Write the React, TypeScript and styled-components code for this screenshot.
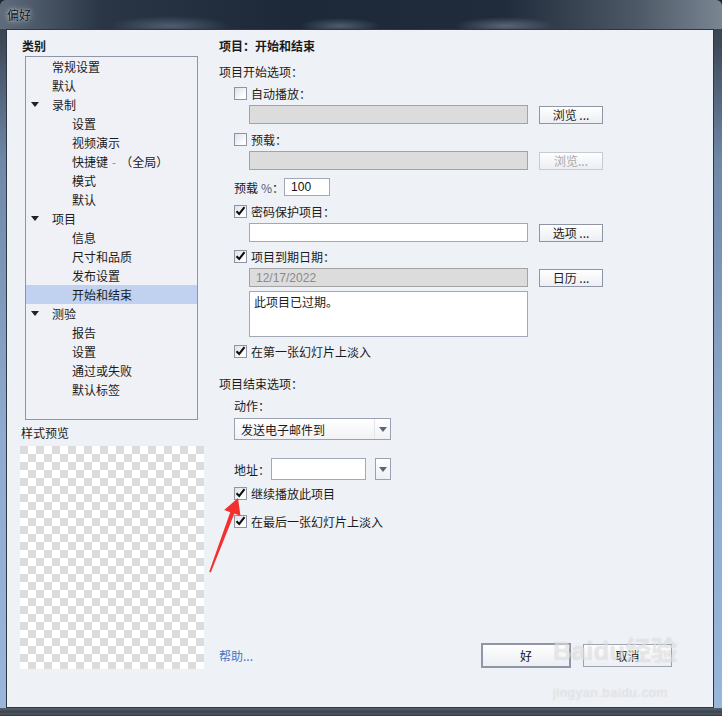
import React from "react";
import styled, { createGlobalStyle } from "styled-components";

const GlobalStyle = createGlobalStyle`
  html, body {
    margin: 0;
    padding: 0;
    background: #1d2631;
  }
  body {
    font-family: "Noto Sans CJK SC", "Liberation Sans", sans-serif;
    font-size: 12px;
    color: #1b1b1b;
  }
`;

const Window = styled.div`
  position: relative;
  width: 722px;
  height: 716px;
  box-sizing: border-box;
  display: flex;
  flex-direction: column;
  overflow: hidden;
  border-radius: 6px 6px 0 0;
  background:
    linear-gradient(to top, #2c333c 0, #4f5a66 2px, #39424d 4px, #59636f 8px, transparent 8px),
    linear-gradient(to bottom, #323d4b 0, #3d4857 40px, #6f88a8 160px, #8eaace 60%, #9ab6da 100%);
`;

const TitleBar = styled.div`
  height: 29px;
  flex: none;
  padding-left: 7px;
  line-height: 29px;
  color: #101418;
  text-shadow: 0 0 6px rgba(255, 255, 255, 0.75), 0 0 2px rgba(255, 255, 255, 0.6);
  background:
    radial-gradient(ellipse 60px 10px at 170px 26px, rgba(160, 175, 195, 0.35), transparent),
    radial-gradient(ellipse 40px 8px at 340px 26px, rgba(170, 185, 205, 0.35), transparent),
    radial-gradient(ellipse 50px 9px at 505px 26px, rgba(200, 210, 225, 0.35), transparent),
    linear-gradient(to right, #5f6c7b 0, #2a3646 14%, #1d2938 40%, #202c3b 70%, #4d5866 88%, #7a8592 100%);
`;

const Client = styled.div`
  flex: 1;
  display: flex;
  margin: 0 8px 8px 6px;
  border: 1px solid #2f3742;
  background: #eef1f6;
  min-height: 0;
`;

const LeftPane = styled.div`
  width: 198px;
  flex: none;
  box-sizing: border-box;
  padding: 7px 0 0 13px;
  display: flex;
  flex-direction: column;
`;

const PaneTitle = styled.div`
  font-weight: bold;
  line-height: 18px;
  margin-left: 2px;
`;

const Tree = styled.div`
  margin: 1px 0 0 5px;
  width: 173px;
  height: 364px;
  box-sizing: border-box;
  border: 1px solid #8f95a8;
  background: #eff1f6;
`;

const TreeRow = styled.div<{ $level: number; $selected?: boolean }>`
  display: flex;
  align-items: center;
  height: 19px;
  padding-left: ${(p) => (p.$level === 1 ? 5 : 46)}px;
  background: ${(p) => (p.$selected ? "#c0d2ef" : "transparent")};
  white-space: nowrap;
`;

const CaretSlot = styled.span`
  width: 21px;
  flex: none;
  display: flex;
  align-items: center;
`;

const Caret = styled.span`
  width: 0;
  height: 0;
  border-left: 4px solid transparent;
  border-right: 4px solid transparent;
  border-top: 5px solid #222;
`;

const Dash = styled.span`
  color: #e07a18;
  margin: 0 4px;
`;

const PreviewLabel = styled.div`
  margin: 4px 0 0 1px;
  line-height: 18px;
`;

const Checker = styled.div`
  margin-top: 4px;
  width: 184px;
  height: 223px;
  background: conic-gradient(#fff 25%, #dcdcdc 0 50%, #fff 0 75%, #dcdcdc 0);
  background-size: 16px 16px;
`;

const RightPane = styled.div`
  flex: 1;
  box-sizing: border-box;
  padding: 7px 41px 39px 14px;
  display: flex;
  flex-direction: column;
`;

const Heading = styled.div`
  font-weight: bold;
  line-height: 18px;
`;

const Line = styled.div<{ $mt: number; $indent?: number }>`
  line-height: 18px;
  margin-top: ${(p) => p.$mt}px;
  margin-left: ${(p) => p.$indent ?? 0}px;
`;

const CheckRow = styled.label<{ $mt: number }>`
  display: flex;
  align-items: center;
  gap: 4px;
  height: 18px;
  margin: ${(p) => p.$mt}px 0 0 15px;
`;

const Box = styled.span`
  width: 13px;
  height: 13px;
  box-sizing: border-box;
  border: 1px solid #8c94a6;
  background: linear-gradient(135deg, #dde1e8, #ffffff 80%);
  display: flex;
  align-items: center;
  justify-content: center;
  overflow: visible;
`;

const FieldRow = styled.div<{ $mt: number; $indent?: number; $gap?: number }>`
  display: flex;
  align-items: center;
  gap: ${(p) => p.$gap ?? 11}px;
  margin: ${(p) => p.$mt}px 0 0 ${(p) => p.$indent ?? 30}px;
`;

const Field = styled.div<{ $w: number; $h: number; $disabled?: boolean }>`
  width: ${(p) => p.$w}px;
  height: ${(p) => p.$h}px;
  flex: none;
  box-sizing: border-box;
  border: 1px solid ${(p) => (p.$disabled ? "#a3a3a3" : "#a2a8b8")};
  background: ${(p) => (p.$disabled ? "#dcdcdc" : "#ffffff")};
  color: ${(p) => (p.$disabled ? "#8a8a8a" : "#111")};
  padding: 0 6px;
  display: flex;
  align-items: center;
  font-family: "Liberation Sans", "Noto Sans CJK SC", sans-serif;
  font-size: 12px;
`;

const Memo = styled.div`
  width: 279px;
  height: 46px;
  box-sizing: border-box;
  border: 1px solid #a2a8b8;
  background: #fff;
  padding: 1px 4px;
  line-height: 18px;
`;

const PushButton = styled.button<{ $disabled?: boolean }>`
  width: 64px;
  height: 18px;
  box-sizing: border-box;
  padding: 0;
  border: 1px solid ${(p) => (p.$disabled ? "#c6cad3" : "#8e95a6")};
  border-radius: 0;
  background: linear-gradient(to bottom, #ffffff, #eceef3);
  color: ${(p) => (p.$disabled ? "#a9a9a9" : "#1b1b1b")};
  font: inherit;
  font-size: 12px;
  line-height: 16px;
`;

const PercentRow = styled.div`
  display: flex;
  align-items: center;
  margin: 8px 0 0 15px;
`;

const PercentLabel = styled.span`
  white-space: nowrap;
`;

const Percent = styled.span`
  color: #50607a;
  margin-left: 3px;
`;

const Select = styled.div`
  width: 157px;
  height: 22px;
  margin: 3px 0 0 15px;
  box-sizing: border-box;
  border: 1px solid #9ba1b2;
  background: linear-gradient(to bottom, #ffffff, #f1f2f5);
  display: flex;
  align-items: center;
`;

const SelectText = styled.span`
  flex: 1;
  padding-left: 6px;
`;

const ArrowZone = styled.span<{ $bordered?: boolean }>`
  width: 15px;
  height: 100%;
  flex: none;
  display: flex;
  align-items: center;
  justify-content: center;
  border-left: ${(p) => (p.$bordered ? "1px solid #e3e5ea" : "none")};
`;

const SmallArrow = styled.span`
  width: 0;
  height: 0;
  border-left: 4px solid transparent;
  border-right: 4px solid transparent;
  border-top: 5px solid #5b6579;
`;

const AddrLabel = styled.span`
  width: 37px;
  flex: none;
  white-space: nowrap;
`;

const DropButton = styled.div`
  width: 16px;
  height: 22px;
  margin-left: 9px;
  flex: none;
  box-sizing: border-box;
  border: 1px solid #9ba1b2;
  background: linear-gradient(to bottom, #ffffff, #eef0f4);
  display: flex;
  align-items: center;
  justify-content: center;
`;

const Footer = styled.div`
  margin-top: auto;
  display: flex;
  align-items: center;
  height: 25px;
`;

const HelpLink = styled.span`
  color: #3d78c6;
  flex: 1;
`;

const DialogButton = styled.button<{ $default?: boolean }>`
  width: ${(p) => (p.$default ? 90 : 89)}px;
  height: ${(p) => (p.$default ? 25 : 23)}px;
  margin-left: ${(p) => (p.$default ? 0 : 12)}px;
  box-sizing: border-box;
  padding: 0;
  border: ${(p) => (p.$default ? "2px solid #9096a8" : "1px solid #9da3b4")};
  border-radius: 0;
  background: linear-gradient(to bottom, #ffffff, #eceef3);
  font: inherit;
  font-size: 12px;
  color: #111;
`;

const ArrowMark = styled.svg`
  position: absolute;
  left: 205px;
  top: 495px;
  width: 45px;
  height: 80px;
  pointer-events: none;
`;

const Watermark = styled.div`
  position: absolute;
  left: 553px;
  top: 638px;
  pointer-events: none;
  color: rgba(255, 255, 255, 0.5);
  text-shadow: 0 0 1px rgba(120, 120, 120, 0.35);
  font-family: "Liberation Sans", "Noto Sans CJK SC", sans-serif;
  line-height: 1;
`;

const WmBig = styled.div`
  font-size: 26px;
  font-weight: bold;
`;

const WmSmall = styled.div`
  font-size: 13px;
  margin-top: 22px;
  letter-spacing: 0.6px;
`;

const Tick = () => (
  <svg width="13" height="13" viewBox="0 0 13 13" style={{ overflow: "visible" }}>
    <path d="M2.5 6.2 L5.2 9 L10.5 2.2" fill="none" stroke="#111" strokeWidth="2.1" />
  </svg>
);

const Check: React.FC<{ checked?: boolean; label: string; mt: number }> = ({ checked, label, mt }) => (
  <CheckRow $mt={mt}>
    <Box>{checked && <Tick />}</Box>
    <span>{label}</span>
  </CheckRow>
);

type Node = { text: React.ReactNode; level: number; open?: boolean; selected?: boolean };

const tree: Node[] = [
  { text: "常规设置", level: 1 },
  { text: "默认", level: 1 },
  { text: "录制", level: 1, open: true },
  { text: "设置", level: 2 },
  { text: "视频演示", level: 2 },
  {
    text: (
      <>
        快捷键<Dash>-</Dash>（全局）
      </>
    ),
    level: 2,
  },
  { text: "模式", level: 2 },
  { text: "默认", level: 2 },
  { text: "项目", level: 1, open: true },
  { text: "信息", level: 2 },
  { text: "尺寸和品质", level: 2 },
  { text: "发布设置", level: 2 },
  { text: "开始和结束", level: 2, selected: true },
  { text: "测验", level: 1, open: true },
  { text: "报告", level: 2 },
  { text: "设置", level: 2 },
  { text: "通过或失败", level: 2 },
  { text: "默认标签", level: 2 },
];

export default function App() {
  return (
    <>
      <GlobalStyle />
      <Window>
        <TitleBar>偏好</TitleBar>
        <Client>
          <LeftPane>
            <PaneTitle>类别</PaneTitle>
            <Tree>
              {tree.map((n, i) => (
                <TreeRow key={i} $level={n.level} $selected={n.selected}>
                  {n.level === 1 && <CaretSlot>{n.open && <Caret />}</CaretSlot>}
                  <span>{n.text}</span>
                </TreeRow>
              ))}
            </Tree>
            <PreviewLabel>样式预览</PreviewLabel>
            <Checker />
          </LeftPane>

          <RightPane>
            <Heading>项目：开始和结束</Heading>
            <Line $mt={8}>项目开始选项：</Line>

            <Check label="自动播放：" mt={3} />
            <FieldRow $mt={3}>
              <Field $w={279} $h={19} $disabled />
              <PushButton>浏览 ...</PushButton>
            </FieldRow>

            <Check label="预载：" mt={6} />
            <FieldRow $mt={3}>
              <Field $w={279} $h={19} $disabled />
              <PushButton $disabled>浏览...</PushButton>
            </FieldRow>

            <PercentRow>
              <PercentLabel>
                预载<Percent>%</Percent>：
              </PercentLabel>
              <Field $w={46} $h={18}>
                100
              </Field>
            </PercentRow>

            <Check checked label="密码保护项目：" mt={6} />
            <FieldRow $mt={3}>
              <Field $w={279} $h={19} />
              <PushButton>选项 ...</PushButton>
            </FieldRow>

            <Check checked label="项目到期日期：" mt={5} />
            <FieldRow $mt={3}>
              <Field $w={279} $h={19} $disabled>
                12/17/2022
              </Field>
              <PushButton>日历 ...</PushButton>
            </FieldRow>
            <FieldRow $mt={4}>
              <Memo>此项目已过期。</Memo>
            </FieldRow>

            <Check checked label="在第一张幻灯片上淡入" mt={5} />

            <Line $mt={15}>项目结束选项：</Line>
            <Line $mt={4} $indent={15}>
              动作：
            </Line>
            <Select>
              <SelectText>发送电子邮件到</SelectText>
              <ArrowZone $bordered>
                <SmallArrow />
              </ArrowZone>
            </Select>

            <FieldRow $mt={18} $indent={15} $gap={0}>
              <AddrLabel>地址：</AddrLabel>
              <Field $w={95} $h={22} />
              <DropButton>
                <SmallArrow />
              </DropButton>
            </FieldRow>

            <Check checked label="继续播放此项目" mt={4} />
            <Check checked label="在最后一张幻灯片上淡入" mt={10} />

            <Footer>
              <HelpLink>帮助...</HelpLink>
              <DialogButton $default>好</DialogButton>
              <DialogButton>取消</DialogButton>
            </Footer>
          </RightPane>
        </Client>

        <ArrowMark viewBox="0 0 45 80">
          <polygon
            points="33,3 35.5,21 29.4,18.6 5.8,77.5 4.2,76.8 25.2,17.2 19.2,15"
            fill="#f2302e"
          />
        </ArrowMark>

        <Watermark>
          <WmBig>Baidu经验</WmBig>
          <WmSmall>jingyan.baidu.com</WmSmall>
        </Watermark>
      </Window>
    </>
  );
}
